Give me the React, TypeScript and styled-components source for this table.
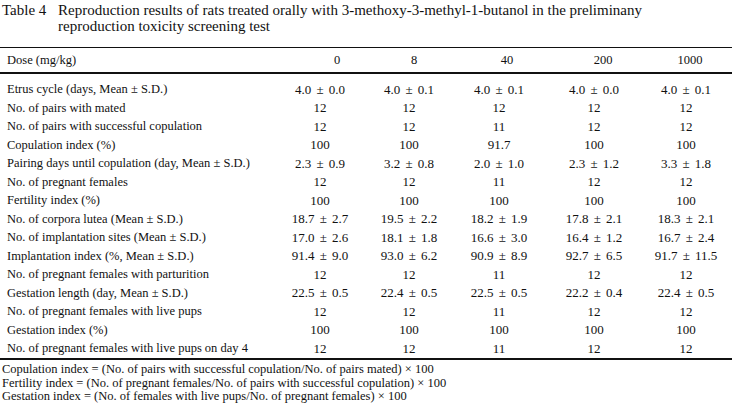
import React from 'react';
import styled, { createGlobalStyle } from 'styled-components';

const GlobalStyle = createGlobalStyle`
  html, body {
    margin: 0;
    padding: 0;
    background: #ffffff;
  }
  body {
    font-family: "Liberation Serif", "Times New Roman", serif;
    color: #111111;
  }
`;

const columns = '274px 92px 86px 94px 96px 88px';

const doses = [
  { label: '0', shift: 17 },
  { label: '8', shift: 5 },
  { label: '40', shift: 8 },
  { label: '200', shift: 9 },
  { label: '1000', shift: 4 },
];

const rows: [string, string[]][] = [
  ['Etrus cycle (days, Mean ± S.D.)', ['4.0 ± 0.0', '4.0 ± 0.1', '4.0 ± 0.1', '4.0 ± 0.0', '4.0 ± 0.1']],
  ['No. of pairs with mated', ['12', '12', '12', '12', '12']],
  ['No. of pairs with successful copulation', ['12', '12', '11', '12', '12']],
  ['Copulation index (%)', ['100', '100', '91.7', '100', '100']],
  ['Pairing days until copulation (day, Mean ± S.D.)', ['2.3 ± 0.9', '3.2 ± 0.8', '2.0 ± 1.0', '2.3 ± 1.2', '3.3 ± 1.8']],
  ['No. of pregnant females', ['12', '12', '11', '12', '12']],
  ['Fertility index (%)', ['100', '100', '100', '100', '100']],
  ['No. of corpora lutea (Mean ± S.D.)', ['18.7 ± 2.7', '19.5 ± 2.2', '18.2 ± 1.9', '17.8 ± 2.1', '18.3 ± 2.1']],
  ['No. of implantation sites (Mean ± S.D.)', ['17.0 ± 2.6', '18.1 ± 1.8', '16.6 ± 3.0', '16.4 ± 1.2', '16.7 ± 2.4']],
  ['Implantation index (%, Mean ± S.D.)', ['91.4 ± 9.0', '93.0 ± 6.2', '90.9 ± 8.9', '92.7 ± 6.5', '91.7 ± 11.5']],
  ['No. of pregnant females with parturition', ['12', '12', '11', '12', '12']],
  ['Gestation length (day, Mean ± S.D.)', ['22.5 ± 0.5', '22.4 ± 0.5', '22.5 ± 0.5', '22.2 ± 0.4', '22.4 ± 0.5']],
  ['No. of pregnant females with live pups', ['12', '12', '11', '12', '12']],
  ['Gestation index (%)', ['100', '100', '100', '100', '100']],
  ['No. of pregnant females with live pups on day 4', ['12', '12', '11', '12', '12']],
];

const notes = [
  'Copulation index = (No. of pairs with successful copulation/No. of pairs mated) × 100',
  'Fertility index = (No. of pregnant females/No. of pairs with successful copulation) × 100',
  'Gestation index = (No. of females with live pups/No. of pregnant females) × 100',
];

export default function App() {
  return (
    <Page>
      <GlobalStyle />
      <Caption>
        <CaptionNumber>Table 4</CaptionNumber>
        <CaptionTitle>
          Reproduction results of rats treated orally with 3-methoxy-3-methyl-1-butanol in the preliminany
          <br />
          reproduction toxicity screening test
        </CaptionTitle>
      </Caption>

      <Table>
        <HeaderRow>
          <Label>Dose (mg/kg)</Label>
          {doses.map((d) => (
            <HeadCell key={d.label} $shift={d.shift}>{d.label}</HeadCell>
          ))}
        </HeaderRow>
        <Body>
          {rows.map(([label, values]) => (
            <Row key={label}>
              <Label>{label}</Label>
              {values.map((v, i) => (
                <Cell key={i}>{v}</Cell>
              ))}
            </Row>
          ))}
        </Body>
      </Table>

      <Notes>
        {notes.map((n) => (
          <Note key={n}>{n}</Note>
        ))}
      </Notes>
    </Page>
  );
}

const Page = styled.div`
  width: 732px;
  height: 405px;
  overflow: hidden;
  padding-top: 2px;
  box-sizing: border-box;
`;

const Caption = styled.div`
  display: flex;
  padding-left: 2px;
  font-size: 15px;
  line-height: 16px;
`;

const CaptionNumber = styled.div`
  width: 56px;
  flex-shrink: 0;
`;

const CaptionTitle = styled.div`
  white-space: nowrap;
`;

const Table = styled.div`
  margin-top: 13px;
  width: 732px;
`;

const HeaderRow = styled.div`
  display: grid;
  grid-template-columns: ${columns};
  align-items: center;
  height: 24px;
  border-top: 1.5px solid #111;
  border-bottom: 2.5px solid #111;
  font-size: 12.5px;
`;

const Body = styled.div`
  padding-top: 6.5px;
  border-bottom: 2px solid #111;
`;

const Row = styled.div`
  display: grid;
  grid-template-columns: ${columns};
  align-items: center;
  height: 18.5px;
  font-size: 12.5px;
`;

const Label = styled.div`
  padding-left: 7px;
  white-space: nowrap;
`;

const Cell = styled.div`
  text-align: center;
  white-space: nowrap;
  font-size: 13px;
  word-spacing: 2px;
`;

const HeadCell = styled(Cell)<{ $shift: number }>`
  padding-left: ${(p) => p.$shift * 2}px;
  font-size: 12.5px;
`;

const Notes = styled.div`
  padding-top: 3px;
  padding-left: 2px;
`;

const Note = styled.div`
  font-size: 12.5px;
  line-height: 13.5px;
  white-space: nowrap;
`;
